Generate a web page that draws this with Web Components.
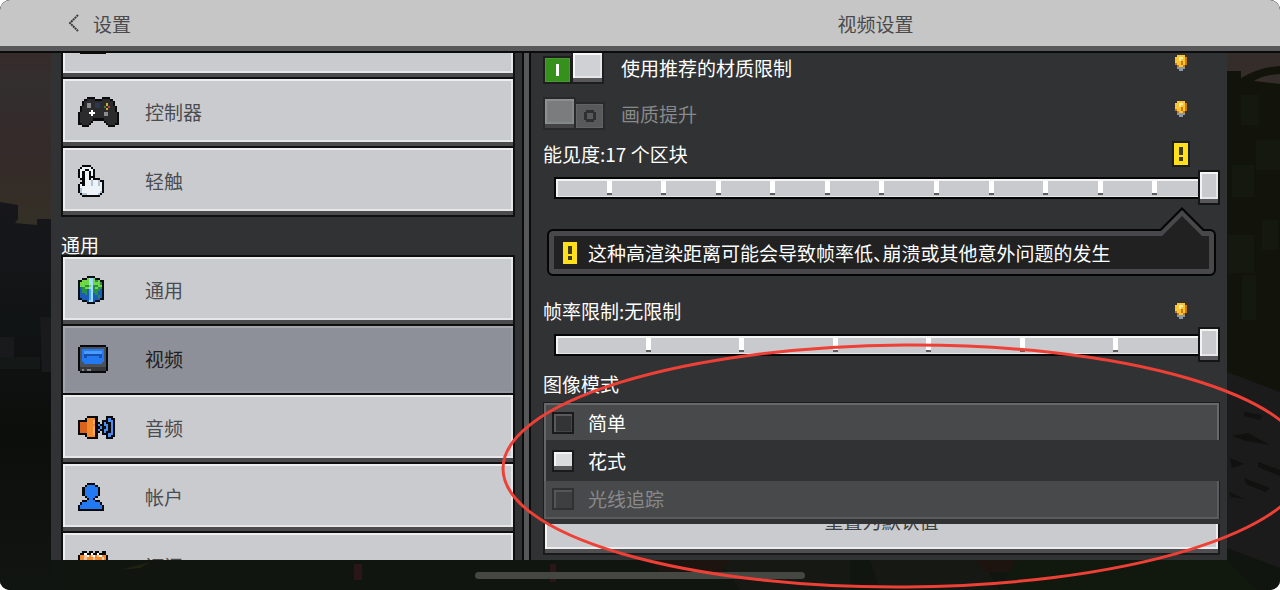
<!DOCTYPE html>
<html lang="zh-CN">
<head>
<meta charset="utf-8">
<meta name="viewport" content="width=device-width, initial-scale=1">
<title>视频设置</title>
<style>
  html, body { margin: 0; height: 100%; background: #fff; }
  body { font: 19px/24px "Noto Sans CJK SC", "Noto Sans", sans-serif; color: #fff; }
</style>
</head>
<body>
<settings-app></settings-app>

<script>
const define = (name, html, setup) => {
  const template = document.createElement('template');
  template.innerHTML = html;
  customElements.define(name, class extends HTMLElement {
    constructor() {
      super();
      this.attachShadow({ mode: 'open' }).append(template.content.cloneNode(true));
    }
    connectedCallback() { if (setup) setup(this, this.shadowRoot); }
  });
};

/* Pixel art: one character per cell, looked up in the icon's palette. */
const ICONS = {
  controller: { w: 41, h: 30, p: { K: '#0b0b0c', d: '#2b2b2e', g: '#8d8d90', b: '#2c3850', y: '#c9b23c', e: '#3d7a45', o: '#b3472f', w: '#fff' }, m: [
    '....KKKK...KKKK....', '...KddddKKKddddK...', '..KdddddddddddddK..', '..KdggddbbdddyddK..',
    '.KddggddbbddedoddK.', '.KdddddddddddydddK.', '.KddddwddddddddddK.', 'KddddwwwddddggddddK',
    'KdddddwdddddggddddK', 'KdddddddddddddddddK', 'KddddddKKKKKddddddK', 'KdddddK.....KdddddK',
    'KKdddK.......KdddKK', '..KKK.........KKK..'] },
  hand: { w: 26, h: 32, p: { K: '#08090b', w: '#eef3f8', c: '#b4c4d4' }, m: [
    '..KKKK......', '.KwwwwK.....', 'KwwKKwwK....', 'KwKwwKwK....', 'KwKwwKwK....', 'KwKwwKKK....',
    '.KKwwKwKKK..', '..KwwwcwwcKK', '.KKwwwcwwcwK', 'KwKwwwcwwcwK', 'KwwwwwwwwwwK', 'KcwwwwwwwwwK',
    'KcwwwwwwwwcK', '.KccwwwwwcK.', '..KKKKKKKK..'] },
  keyboard: { w: 30, h: 22, p: { K: '#0b0b0c', d: '#3a3a3d' }, m: [
    'KKKKKKKKKKKKKK', 'KddddddddddddK', 'KddddddddddddK', 'KddddddddddddK', 'KddddddddddddK',
    'KddddddddddddK', 'KddddddddddddK', 'KddddddddddddK', '.KKKKKKKKKKKK.'] },
  globe: { w: 26, h: 28, p: { K: '#080d16', l: '#6fd644', g: '#269043', b: '#1a5cb8', c: '#4aa4e8', w: '#9fdcff' }, m: [
    '....KKKK....', '..KKlwwlKK..', 'KKlllwwlglKK', 'KllllwwlllgK', 'KllgglwggllK', 'KbgllwwglggK', 'KbggbcwgggbK',
    'KbggbcwggbbK', 'KbbgbcwbgbbK', 'KbbbbcwbbgbK', 'KKbbbcwbbbKK', '..KKbwwbKK..', '....KKKK....'] },
  screen: { w: 30, h: 28, p: { K: '#08090c', s: '#4c5058', B: '#2379f2', L: '#4a9bff', n: '#164fae', t: '#37383b', u: '#85868a' }, m: [
    '.KKKKKKKKKKKK.', 'KssssssssssssK', 'KsBBBBBBBBBBsK', 'KsBLLLLLLLLBsK', 'KsBnnnnnnnnBsK', 'KsBnBBBBBBnBsK',
    'KsBBBBBBBBBBsK', 'KsBBBBBBBBBBsK', 'KssBBBBBBBBssK', 'KssssssssssssK', 'KttttttttttttK', 'KtutuutttttttK',
    '.KKKKKKKKKKKK.'] },
  speaker: { w: 37, h: 23, p: { K: '#0a0a0c', o: '#f18a2c', O: '#f9a94e', r: '#d9621d', L: '#4b8cf0' }, m: [
    '....KKKKK....KKK.', '...KooooK....KLKK', 'KKKKoooOK..KKKLLK', 'KrrroooOKK.KLKKLK', 'KrrrooooKLKKLLKLK',
    'KrrroooOKKLKKLKLK', 'KrrroooOKLKKLLKLK', 'KrrroooOKK.KLKKLK', 'KKKKoooOK..KKKLLK', '...KooooK....KLKK',
    '....KKKKK....KKK.'] },
  person: { w: 26, h: 28, p: { K: '#08090c', B: '#2379f2' }, m: [
    '....KKKK....', '...KBBBBK...', '..KBBBBBBK..', '..KBBBBBBK..', '..KBBBBBBK..', '..KBBBBBBK..', '...KBBBBK...',
    '....KBBK....', '..KKBBBBKK..', '.KBBBBBBBBK.', 'KBBBBBBBBBBK', 'KBBBBBBBBBBK', 'KKKKKKKKKKKK'] },
  calendar: { w: 30, h: 30, p: { K: '#0a0a0c', o: '#f18a2c', w: '#fff', s: '#f6c69a' }, m: [
    '..KK.KK.KK.KK.', '.KKwKKwKKwKKK.', 'KooswoswoswooK', 'KoosooosooosoK', 'KooooooooooooK', 'KwwwwwwwwwwwwK',
    'KwwwwwwwwwwwwK', 'KwwwwwwwwwwwwK', 'KwwwwwwwwwwwwK', 'KwwwwwwwwwwwwK', 'KwwwwwwwwwwwwK', 'KwwwwwwwwwwwwK',
    'KwwwwwwwwwwwwK', 'KKKKKKKKKKKKKK'] },
  bulb: { w: 12, h: 16, p: { o: '#c87a14', y: '#fcc332', w: '#fff0a0', s: '#8f97a6' }, m: [
    '.yyyy.', 'yywwyo', 'yywyyo', 'yyyoyo', 'oyyoyo', '.oyyo.', '.ssss.', '..ss..'] },
  warning: { w: 18, h: 26, p: { K: '#1d1d1e', y: '#ffe01b', d: '#3d3a22' }, m: [
    'KKKKKKKK', 'KyyyyyyK', 'KyyyyyyK', 'KyyddyyK', 'KyyddyyK', 'KyyddyyK', 'KyyddyyK', 'KyyyyyyK',
    'KyyddyyK', 'KyyddyyK', 'KyyyyyyK', 'KyyyyyyK', 'KKKKKKKK'] },
  alert: { w: 14, h: 22, p: { y: '#ffe01b', d: '#3d3a22' }, m: [
    'yyyyyy', 'yyyyyy', 'yyddyy', 'yyddyy', 'yyddyy', 'yyddyy', 'yyyyyy', 'yyddyy', 'yyddyy', 'yyyyyy', 'yyyyyy'] }
};

define('pixel-icon', `
<style>:host { display: block; flex: none; line-height: 0; } svg { display: block; }</style>
<div></div>`,
(host, root) => {
  const icon = ICONS[host.getAttribute('name')];
  if (!icon) return;
  let rects = '';
  icon.m.forEach((row, y) => {
    for (let x = 0; x < row.length;) {
      let n = 1;
      while (row[x + n] === row[x]) n++;
      if (row[x] !== '.') rects += `<rect x="${x}" y="${y}" width="${n}" height="1" fill="${icon.p[row[x]]}"/>`;
      x += n;
    }
  });
  root.querySelector('div').innerHTML = `<svg width="${icon.w}" height="${icon.h}" viewBox="0 0 ${icon.m[0].length} ${icon.m.length}" preserveAspectRatio="none" shape-rendering="crispEdges" aria-hidden="true">${rects}</svg>`;
});

define('world-backdrop', `
<style>:host { display: block; } svg { display: block; width: 100%; height: 100%; }</style>
<svg viewBox="0 0 1280 590" preserveAspectRatio="none" aria-hidden="true">
  <defs>
    <linearGradient id="sky" x1="0" y1="0" x2="0" y2="1"><stop offset="0" stop-color="#372a28"/><stop offset=".2" stop-color="#332f2f"/><stop offset=".55" stop-color="#352a2a"/><stop offset="1" stop-color="#343026"/></linearGradient>
    <linearGradient id="land" x1="0" y1="0" x2="0" y2="1"><stop offset="0" stop-color="#17171b"/><stop offset=".3" stop-color="#111415"/><stop offset=".6" stop-color="#0c0e0b"/><stop offset="1" stop-color="#111511"/></linearGradient>
  </defs>
  <rect width="1280" height="590" fill="#10150f"/>
  <rect y="46" width="51" height="180" fill="url(#sky)"/>
  <path d="M0 202L18 205V219L15 223 37 225V219H52V590H0Z" fill="url(#land)"/>
  <path d="M40 317h11v55h-9zM0 337h14v20H0z" fill="#181a1b"/>
  <path d="M0 357h40v12H0z" fill="#141817"/>
  <rect x="1227" y="46" width="53" height="40" fill="#352d2a"/>
  <path d="M1227 71H1241V78Q1260 67 1280 66V74Q1262 75 1254 81L1280 84V390H1227Z" fill="#12140c"/>
  <path d="M1241 95h18v30h-18zM1232 165h22v32h-22zM1256 140h24v30h-24zM1228 235h26v38h-26zM1242 275h14v45h-14zM1262 220h16v30h-16z" fill="#15180e"/>
  <path d="M1227 372L1280 392V568L1227 548Z" fill="#1c1b1b"/>
  <path d="M1244 412l18 3-2 5-16-4zM1232 436l16-3 22 12-24-4zM1258 462l22 8v6l-22-9zM1230 458l14 6-12 4zM1244 478l26 10-4 4-20-8zM1229 492l16 7-14-2z" fill="#111210"/>
  <path d="M870 560h110l20 30H880zM720 560h130v30H740z" fill="#161814"/>
  <path d="M650 560h80l-10 14h-60zM975 560h40v12h-30z" fill="#1d1410"/>
  <path d="M1015 560h212l30 30H1000z" fill="#11190e"/>
  <path d="M120 570l30-8-10 6z" fill="#222211"/>
  <path d="M354 564h8v16h-8zM550 564h6v18h-6z" fill="#2a1616"/>
</svg>`);

define('top-bar', `
<style>
  :host { display: block; background: #c6c6c6; color: #4a4a4c; border-bottom: 2px solid #0b0b0c; box-shadow: inset 0 -5px #58585a; height: 51px; }
  header { display: grid; grid-template-columns: 473fr 703fr; padding: 0 53px 5px 51px; height: 46px; align-items: center; }
  button { all: unset; cursor: pointer; display: flex; align-items: center; gap: 14px; margin-left: 17px; justify-self: start; }
  h1 { all: unset; text-align: center; }
  h1, span { padding-top: 2px; }
</style>
<header>
  <button type="button"><svg width="11" height="18" viewBox="0 0 11 18" fill="none" stroke="#3c3c3e" stroke-width="2" aria-hidden="true"><path d="M10 1L2 9l8 8" stroke-dasharray="2 .6"/></svg><span><slot name="back"></slot></span></button>
  <h1><slot></slot></h1>
</header>`);

define('nav-item', `
<style>
  :host { display: block; }
  button { all: unset; box-sizing: border-box; cursor: pointer; display: flex; align-items: center; width: 100%; height: 69px;
    border: solid #0f0f10; border-width: 2px 2px 0; padding: 2px 15px 4px; background: #cacbce; color: #4b4c50;
    box-shadow: inset 0 -4px #4b4b4d, inset 2px 2px #ededef, inset -2px -6px #e6e6e8; }
  .icon { width: 67px; flex: none; }
  :host([selected]) button { background: #8d9098; color: #1e1f22; box-shadow: inset 2px 2px #a4a6ac, inset -2px -2px #9698a0; }
</style>
<button type="button"><span class="icon"></span><slot></slot></button>`,
(host, root) => {
  root.querySelector('.icon').innerHTML = `<pixel-icon name="${host.getAttribute('icon')}"></pixel-icon>`;
  if (host.hasAttribute('selected')) root.querySelector('button').setAttribute('aria-current', 'page');
});

define('nav-group', `
<style>
  :host { display: block; }
  .list { border-bottom: 2px solid #0f0f10; }
  ::slotted([slot=title]) { display: block; padding-top: 18px; line-height: 20px; }
</style>
<slot name="title"></slot><div class="list"><slot></slot></div>`);

define('toggle-row', `
<style>
  :host { display: flex; align-items: center; height: 46px; }
  label { display: flex; align-items: center; gap: 16px; flex: 1; cursor: pointer; }
  span { padding-bottom: 2px; }
  input { appearance: none; margin: 0 0 2px; width: 62px; height: 32px; flex: none; display: flex; align-items: flex-end; }
  input::before, input::after { content: ""; box-sizing: border-box; border: 2px solid #1e1e1f; }
  input::before { order: 1; width: 29px; height: 28px; background: linear-gradient(#fff, #fff) center / 3px 12px no-repeat #36901c; box-shadow: inset 0 0 0 1px #4a9a33; }
  input::after { order: 2; width: 33px; height: 33px; margin-left: -1px; background: #d0d1d4; box-shadow: inset 0 -4px #58585a, inset 2px 2px #f7f7f8, inset -2px -6px #e6e6e8; }
  input:not(:checked)::before { order: 2; width: 31px; margin-left: -2px; border-color: #29292a;
    background: linear-gradient(#58595b, #58595b) center / 6px 6px no-repeat, linear-gradient(#303031, #303031) center / 12px 8px no-repeat, linear-gradient(#303031, #303031) center / 8px 12px no-repeat #58595b; box-shadow: inset 0 0 0 1px #626365; }
  input:not(:checked)::after { order: 1; margin: 0; border-color: #29292a; background: #7b7c7e; box-shadow: inset 0 -4px #444446, inset 2px 2px #8e8f91, inset -2px -6px #868789; }
  :host([disabled]) label { color: #88898a; }
  pixel-icon { align-self: flex-start; margin: 9px 33px 0 0; }
</style>
<label><input type="checkbox"><span><slot></slot></span></label><pixel-icon name="bulb"></pixel-icon>`,
(host, root) => {
  const input = root.querySelector('input');
  input.checked = host.hasAttribute('checked');
  input.disabled = host.hasAttribute('disabled');
});

define('step-slider', `
<style>
  :host { display: block; }
  .head { display: flex; align-items: center; justify-content: space-between; height: 32px; }
  .mark { width: 18px; margin-right: 30px; display: grid; justify-items: center; }
  .control { display: grid; align-items: center; height: 35px; }
  .control > * { grid-area: 1 / 1; }
  .track { margin: 0 11px; height: 22px; box-sizing: border-box; border: 2px solid #060607; background: #c9cacd; box-shadow: inset 2px 2px #f4f4f5, inset 0 -1px #e6e6e8; }
  .ticks { display: flex; margin: 0 8px 0 14px; }
  .ticks span { flex: 1; display: flex; justify-content: flex-end; }
  .ticks i { width: 5px; height: 12px; border-bottom: 2px solid #5d5d5f; background: #fff; background-clip: padding-box; }
  .ticks span:last-child { visibility: hidden; }
  input { appearance: none; background: none; margin: 0; width: 100%; height: 35px; }
  input::-webkit-slider-thumb { appearance: none; box-sizing: border-box; width: 22px; height: 35px; border: 2px solid #151516; background: #c9cacd;
    box-shadow: inset 0 -4px #58585a, inset 2px 2px #f4f4f5, inset -2px -6px #e6e6e8; }
</style>
<div class="head"><label for="range"><slot></slot></label><div class="mark"></div></div>
<div class="control"><div class="track"></div><div class="ticks"></div><input id="range" type="range"></div>`,
(host, root) => {
  const steps = +host.getAttribute('steps');
  const input = root.querySelector('input');
  input.max = steps;
  input.value = steps;
  root.querySelector('.ticks').innerHTML = '<span><i></i></span>'.repeat(steps);
  root.querySelector('.mark').innerHTML = `<pixel-icon name="${host.getAttribute('mark')}"></pixel-icon>`;
});

define('callout-note', `
<style>
  :host { display: flex; align-items: center; gap: 11px; position: relative; box-sizing: border-box; height: 47px; padding: 0 14px; background: #212122;
    border: 2px solid #050505; border-radius: 6px; box-shadow: inset 0 0 0 5px #48484a; font-feature-settings: "halt"; }
  svg { position: absolute; right: 5px; top: -25px; }
  p { margin: 0; }
</style>
<pixel-icon name="alert"></pixel-icon><p><slot></slot></p>
<svg width="54" height="31" viewBox="0 0 54 31" aria-hidden="true"><path d="M3 25L27 1l24 24z" fill="#050505"/><path d="M4 30V27L27 4l23 23v3z" fill="#48484a"/><path d="M7 30L27 10l20 20z" fill="#212122"/></svg>`);

define('radio-group', `
<style>
  :host { display: block; position: relative; z-index: 1; background: #313233; }
  fieldset { all: unset; display: block; }
  legend { padding: 10px 0 6px; display: block; float: left; width: 100%; }
  .rows { clear: both; margin-bottom: 5px; background: #48494a; border: solid #1e1e1f; border-width: 1px 1px 0; }
  .rows div { border: 0 solid #67686a; border-left-width: 2px; padding-left: 6px; display: flex; }
  .rows .a { height: 35px; border-top-width: 2px; border-right-width: 2px; }
  .rows .b { height: 41px; background: #313233; margin-right: -1px; }
  .rows .c { height: 36px; border-bottom-width: 2px; border-right-width: 2px; color: #88898a; border-color: #5b5c5e; }
  label { display: flex; align-items: center; gap: 14px; flex: 1; }
  input { appearance: none; margin: 0; width: 22px; height: 22px; border: 2px solid #1a1a1b; background: #333435; box-shadow: inset 2px 2px #59595b, inset -1px -1px #454547; }
  input:checked { background: #dadbdd; box-shadow: inset 0 -4px #58585a, inset 2px 2px #f4f4f5; }
  input:disabled { border-color: #303132; background: #3e3f40; box-shadow: inset 2px 2px #555658; }
</style>
<fieldset><legend><slot name="title"></slot></legend>
<div class="rows">
  <div class="a"><label><input type="radio" name="mode"><slot name="first"></slot></label></div>
  <div class="b"><label><input type="radio" name="mode" checked><slot name="second"></slot></label></div>
  <div class="c"><label><input type="radio" name="mode" disabled><slot name="third"></slot></label></div>
</div></fieldset>`);

define('wide-button', `
<style>
  :host { display: block; }
  button { all: unset; box-sizing: border-box; width: 100%; height: 68px; text-align: center; cursor: pointer; border: 2px solid #1a1a1b; background: #cacbce; color: #3e3f42;
    box-shadow: inset 0 -4px #4f4f51, inset 2px 2px #f4f4f5, inset -2px -6px #ededef; }
</style>
<button type="button"><slot></slot></button>`);

define('ellipse-mark', `
<style>:host { display: block; pointer-events: none; } svg { display: block; width: 100%; height: 100%; }</style>
<svg viewBox="0 0 1280 590" preserveAspectRatio="none" aria-hidden="true"><ellipse cx="905" cy="466" rx="402" ry="121" transform="rotate(-.4 905 466)" fill="none" stroke="#ee4036" stroke-width="3"/></svg>`);

define('settings-app', `
<style>
  :host { display: flex; flex-direction: column; position: relative; height: 100vh; min-height: 400px; overflow: hidden; border-radius: 10px; background: #10150f; }
  world-backdrop, ellipse-mark { position: absolute; inset: 0; }
  ellipse-mark { z-index: 3; }
  top-bar, main, footer { position: relative; }
  main { flex: 1; min-height: 0; display: grid; grid-template-columns: minmax(0, 473fr) minmax(0, 703fr); padding: 0 53px 0 51px; }
  nav, section { min-height: 0; overflow: hidden; background: #313233; }
  nav { padding: 0 7px 0 10px; border-right: 2px solid #0b0b0c; }
  .sections { margin-top: -45px; }
  section { border-left: 5px solid #58585a; box-shadow: inset 2px 0 #0b0b0c; }
  .options { margin-top: -7px; padding: 0 7px 0 14px; }
  callout-note { margin: 24px 4px 19px; }
  wide-button { margin-top: -37px; }
  footer { height: 30px; display: flex; justify-content: center; align-items: center; flex: none; }
  footer i { width: 330px; height: 7px; border-radius: 4px; background: #454743; }
</style>
<world-backdrop></world-backdrop>
<top-bar><span slot="back">设置</span>视频设置</top-bar>
<main>
  <nav aria-label="设置">
    <div class="sections">
      <nav-group>
        <nav-item icon="keyboard">键盘和鼠标</nav-item>
        <nav-item icon="controller">控制器</nav-item>
        <nav-item icon="hand">轻触</nav-item>
      </nav-group>
      <nav-group>
        <span slot="title">通用</span>
        <nav-item icon="globe">通用</nav-item>
        <nav-item icon="screen" selected>视频</nav-item>
        <nav-item icon="speaker">音频</nav-item>
        <nav-item icon="person">帐户</nav-item>
        <nav-item icon="calendar">订阅</nav-item>
      </nav-group>
    </div>
  </nav>
  <section aria-label="视频设置">
    <div class="options">
      <toggle-row checked>使用推荐的材质限制</toggle-row>
      <toggle-row disabled>画质提升</toggle-row>
      <step-slider steps="12" mark="warning">能见度:17 个区块</step-slider>
      <callout-note>这种高渲染距离可能会导致帧率低、崩溃或其他意外问题的发生</callout-note>
      <step-slider steps="7" mark="bulb">帧率限制:无限制</step-slider>
      <radio-group>
        <span slot="title">图像模式</span>
        <span slot="first">简单</span><span slot="second">花式</span><span slot="third">光线追踪</span>
      </radio-group>
      <wide-button>重置为默认值</wide-button>
    </div>
  </section>
</main>
<footer><i></i></footer>
<ellipse-mark></ellipse-mark>`);
</script>
</body>
</html>
